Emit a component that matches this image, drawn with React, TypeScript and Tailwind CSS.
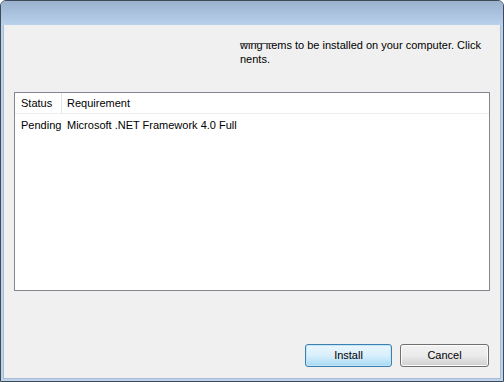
export default function App() {
  const font = { fontFamily: '"Liberation Sans", Arial, sans-serif' };
  return (
    <div className="w-[504px] h-[382px] bg-white" style={font}>
      <div className="w-[504px] h-[382px] flex flex-col border border-[#3e4a58] rounded-t-[6px] bg-[#bcd3eb] overflow-hidden">
        <div className="h-[24px] shrink-0 bg-gradient-to-b from-[#9bb2cf] to-[#b9d1eb]" />
        <div className="flex-1 mx-[2px] mb-[2px] bg-[#f0f0f0] border-x border-b border-[#a9bcd3] flex flex-col text-[11px] text-black relative">
          <div className="ml-[236px] mt-[13px] leading-[14px] relative">
            <div>wing items to be installed on your computer. Click</div>
            <div>nents.</div>
            <div className="absolute left-0 top-0 w-[33px] h-[6px] bg-[#f0f0f0] border-b border-[#555]" />
          </div>
          <div className="mx-[10px] mt-[26px] h-[199px] border border-[#828790] bg-white flex flex-col">
            <div className="h-[21px] flex items-center border-b border-[#ececec]">
              <div className="w-[47px] pl-[6px] h-full flex items-center border-r border-[#e5e5e5]">Status</div>
              <div className="pl-[5px]">Requirement</div>
            </div>
            <div className="h-[22px] flex items-center">
              <div className="w-[47px] pl-[6px]">Pending</div>
              <div className="pl-[5px]">Microsoft .NET Framework 4.0 Full</div>
            </div>
          </div>
          <div className="flex-1" />
          <div className="flex justify-end gap-[8px] mr-[11px] mb-[11px]">
            <div className="w-[87px] h-[23px] rounded-[3px] border border-[#3c7fb1] bg-gradient-to-b from-[#eaf6fd] via-[#d9f0fc] to-[#a7d9f5] flex items-center justify-center shadow-[inset_0_0_0_1px_#c4e5f6]">Install</div>
            <div className="w-[89px] h-[23px] rounded-[3px] border border-[#707070] bg-gradient-to-b from-[#f2f2f2] via-[#ebebeb] to-[#cfcfcf] flex items-center justify-center shadow-[inset_0_0_0_1px_#fcfcfc]">Cancel</div>
          </div>
        </div>
      </div>
    </div>
  );
}
